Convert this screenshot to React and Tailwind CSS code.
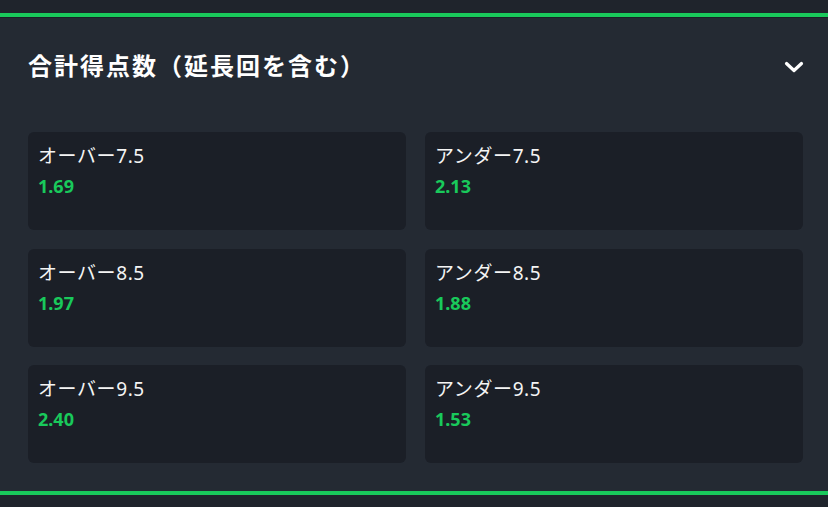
import React from "react";

const rows = [
  [
    { label: "オーバー7.5", odds: "1.69" },
    { label: "アンダー7.5", odds: "2.13" },
  ],
  [
    { label: "オーバー8.5", odds: "1.97" },
    { label: "アンダー8.5", odds: "1.88" },
  ],
  [
    { label: "オーバー9.5", odds: "2.40" },
    { label: "アンダー9.5", odds: "1.53" },
  ],
];

const font = { fontFamily: '"Noto Sans", "Noto Sans CJK JP", sans-serif' };

export default function App() {
  return (
    <div className="w-[828px] h-[507px] bg-[#1f242c] overflow-hidden" style={font}>
      <div className="h-[13px]" />
      <div className="h-[4px] bg-[#19c95b]" />
      <div className="h-[1px] bg-[#1b1f26]" />
      <div className="bg-[#242a33]">
        <div className="h-[96px] flex items-center justify-between pl-[28px] pr-[24px]">
          <div className="text-[24px] font-bold text-white tracking-[2px]">
            合計得点数（延長回を含む）
          </div>
          <svg width="20" height="14" viewBox="0 0 20 14" className="mt-[2px]">
            <path d="M2.5 3.5 L10 10.5 L17.5 3.5" fill="none" stroke="white" strokeWidth="3.2" strokeLinecap="round" strokeLinejoin="round" />
          </svg>
        </div>
        <div className="pt-[18px] pb-[28px] pl-[28px] pr-[25px] grid grid-cols-2 gap-x-[19px] gap-y-[18.5px]">
          {rows.flat().map((c, i) => (
            <div key={i} className="h-[98px] rounded-[6px] bg-[#1b1f27] pl-[10px] pt-[11px]">
              <div className="text-[19px] leading-[26px] tracking-[0.6px] text-[#f4f4f4]">{c.label}</div>
              <div className="text-[18px] leading-[34px] font-bold text-[#19c95b]">{c.odds}</div>
            </div>
          ))}
        </div>
      </div>
      <div className="h-[4px] bg-[#19c95b]" />
    </div>
  );
}
